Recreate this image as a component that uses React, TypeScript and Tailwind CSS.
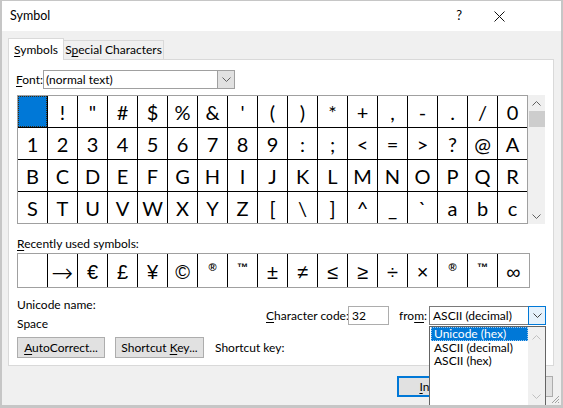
import React from "react";

const rows: string[][] = [
  [" ", "!", '"', "#", "$", "%", "&", "'", "(", ")", "*", "+", ",", "-", ".", "/", "0"],
  ["1", "2", "3", "4", "5", "6", "7", "8", "9", ":", ";", "<", "=", ">", "?", "@", "A"],
  ["B", "C", "D", "E", "F", "G", "H", "I", "J", "K", "L", "M", "N", "O", "P", "Q", "R"],
  ["S", "T", "U", "V", "W", "X", "Y", "Z", "[", "\\", "]", "^", "_", "`", "a", "b", "c"],
];

const recent: string[] = ["", "→", "€", "£", "¥", "©", "®", "™", "±", "≠", "≤", "≥", "÷", "×", "®", "™", "∞"];

function ChevDown({ color = "#606060" }: { color?: string }) {
  return (
    <svg width="9" height="5" viewBox="0 0 9 5">
      <path d="M0.5 0.5 L4.5 4.5 L8.5 0.5" fill="none" stroke={color} strokeWidth="1" />
    </svg>
  );
}
function ChevUp({ color = "#606060" }: { color?: string }) {
  return (
    <svg width="9" height="5" viewBox="0 0 9 5">
      <path d="M0.5 4.5 L4.5 0.5 L8.5 4.5" fill="none" stroke={color} strokeWidth="1" />
    </svg>
  );
}

export default function App() {
  return (
    <div className="relative w-[563px] h-[408px] overflow-hidden bg-[#f0f0f0] border-t border-x-2 border-b-[3px] border-[#c6c6c6] text-[12px] text-black font-[family-name:Lato,sans-serif]">
      {/* Title bar */}
      <div className="h-[30px] bg-white flex items-center pl-[8px]">
        <span className="text-[12.5px]">Symbol</span>
        <div className="ml-auto flex items-center mr-[56px]">
          <span className="text-[13px] mr-[32px]">?</span>
          <svg width="11" height="11" viewBox="0 0 11 11">
            <path d="M0.5 0.5 L10.5 10.5 M10.5 0.5 L0.5 10.5" stroke="#111" strokeWidth="1" />
          </svg>
        </div>
      </div>

      {/* Tabs */}
      <div className="flex items-end h-[21px] mt-[7px] ml-[6px] relative z-10">
        <div className="w-[56px] h-[22px] -mb-px bg-white border-x border-t border-[#d9d9d9] flex items-center justify-center">
          <span>
            <span className="underline underline-offset-2">S</span>ymbols
          </span>
        </div>
        <div className="w-[100px] h-[19px] border-r border-t border-[#d9d9d9] flex items-center justify-center">
          <span>
            S<span className="underline underline-offset-2">p</span>ecial Characters
          </span>
        </div>
      </div>

      {/* Panel */}
      <div className="ml-[6px] w-[546px] h-[307px] bg-white border border-[#d9d9d9] pt-[10px] pl-[8px]">
        {/* Font row */}
        <div className="flex items-center h-[19px]">
          <span className="w-[27px] -ml-px">
            <span className="underline underline-offset-2">F</span>ont:
          </span>
          <div className="w-[192px] h-[19px] border border-[#a0a0a0] flex items-center">
            <span className="pl-[2px] flex-1">(normal text)</span>
            <div className="w-[17px] h-[17px] bg-[#e1e1e1] border-l border-[#a0a0a0] flex items-center justify-center">
              <ChevDown />
            </div>
          </div>
        </div>

        {/* Symbol grid */}
        <div className="flex mt-[6px]">
          <div className="border border-[#a0a0a0]">
            <div className="grid grid-cols-[repeat(17,29px)] auto-rows-[31px] gap-px bg-black">
              {rows.flat().map((c, i) => (
                <div
                  key={i}
                  className={
                    i === 0
                      ? "bg-[#0078d7] border border-dotted border-[#3a2a10]"
                      : "bg-white flex items-center justify-center text-[20px] leading-none"
                  }
                >
                  {i === 0 ? null : c}
                </div>
              ))}
            </div>
          </div>
          <div className="w-[17px] h-[129px] bg-[#f0f0f0] flex flex-col items-center">
            <div className="h-[16px] flex items-center justify-center">
              <ChevUp />
            </div>
            <div className="w-[16px] h-[16px] bg-[#cdcdcd]" />
            <div className="flex-1" />
            <div className="h-[16px] flex items-center justify-center">
              <ChevDown />
            </div>
          </div>
        </div>

        {/* Recently used */}
        <div className="h-[16px] mt-[12px] leading-[16px]">
          <span className="underline underline-offset-2">R</span>ecently used symbols:
        </div>
        <div className="mt-px w-[513px] border border-[#a0a0a0]">
          <div className="grid grid-cols-[repeat(16,29px)_31px] h-[33px] gap-px bg-black">
            {recent.map((c, i) => {
              const small = c === "®" || c === "™";
              const arrow = c === "→";
              return (
                <div
                  key={i}
                  className={
                    small
                      ? "bg-white flex justify-center pt-[8px] text-[11px] leading-none font-[family-name:'Liberation_Sans',sans-serif] font-bold"
                      : arrow
                      ? "bg-white flex items-center justify-center text-[26px] leading-none pt-[4px] font-[family-name:'DejaVu_Sans',sans-serif] font-light"
                      : "bg-white flex items-center justify-center text-[20px] leading-none pt-[2px] font-[family-name:'Liberation_Sans',sans-serif]"
                  }
                >
                  {c}
                </div>
              );
            })}
          </div>
        </div>

        {/* Unicode name / character code */}
        <div className="flex">
          <div className="w-[249px]">
            <div className="h-[16px] mt-[9px] leading-[16px]">Unicode name:</div>
            <div className="h-[16px] mt-[3px] leading-[16px]">Space</div>
          </div>
          <div className="mt-[18px] flex items-center h-[19px]">
            <span className="w-[82px] whitespace-nowrap">
              <span className="underline underline-offset-2">C</span>haracter code:
            </span>
            <div className="w-[41px] h-[19px] border border-[#adadad] flex items-center pl-[3px]">32</div>
            <span className="ml-[10px] w-[30px] whitespace-nowrap">
              fro<span className="underline underline-offset-2">m</span>:
            </span>
            <div className="w-[117px] h-[19px] border border-[#7a7a7a] flex items-center">
              <span className="flex-1 pl-[3px] whitespace-nowrap">ASCII (decimal)</span>
              <div className="w-[18px] h-[19px] -mr-px bg-[#e5f1fb] border border-[#0078d7] flex items-center justify-center">
                <ChevDown color="#404040" />
              </div>
            </div>
          </div>
        </div>

        {/* Buttons row */}
        <div className="flex items-center mt-[5px] h-[21px]">
          <div className="w-[88px] h-[21px] bg-[#e1e1e1] border border-[#adadad] flex items-center justify-center">
            <span>
              <span className="underline underline-offset-2">A</span>utoCorrect...
            </span>
          </div>
          <div className="ml-[10px] w-[89px] h-[21px] bg-[#e1e1e1] border border-[#adadad] flex items-center justify-center">
            <span>
              Shortcut <span className="underline underline-offset-2">K</span>ey...
            </span>
          </div>
          <span className="ml-[11px]">Shortcut key:</span>
        </div>
      </div>

      {/* Dialog buttons */}
      <div className="flex justify-end gap-[6px] pr-[8px] mt-[10px]">
        <div className="w-[75px] h-[21px] bg-[#e1e1e1] border-2 border-[#0078d7] flex items-center justify-center">
          <span>
            <span className="underline underline-offset-2">I</span>nsert
          </span>
        </div>
        <div className="w-[75px] h-[21px] bg-[#e1e1e1] border border-[#adadad] flex items-center justify-center">
          Cancel
        </div>
      </div>

      {/* Resize grip */}
      <svg className="absolute right-[1px] bottom-[1px]" width="9" height="9" viewBox="0 0 9 9">
        <path d="M8 1 L1 8 M8 4 L4 8 M8 7 L7 8" stroke="#a0a0a0" strokeWidth="1" />
      </svg>

      {/* Open dropdown list */}
      <div className="absolute left-[427px] top-[325px] w-[117px] h-[84px] bg-white border border-[#646464] flex">
        <div className="flex-1 pl-px">
          <div className="h-[14px] bg-[#0078d7] text-white border border-dotted border-[#9cc8f0] flex items-center pl-[2px] leading-[12px] whitespace-nowrap">
            Unicode (hex)
          </div>
          <div className="h-[13px] flex items-center pl-[3px] leading-[13px] whitespace-nowrap">ASCII (decimal)</div>
          <div className="h-[13px] flex items-center pl-[3px] leading-[13px] whitespace-nowrap">ASCII (hex)</div>
        </div>
        <div className="w-[17px] bg-[#f0f0f0] flex flex-col items-center">
          <div className="h-[16px] flex items-center justify-center mt-[2px]">
            <ChevUp color="#c0c0c0" />
          </div>
          <div className="flex-1" />
          <div className="h-[16px] flex items-center justify-center mb-[5px]">
            <ChevDown color="#c0c0c0" />
          </div>
        </div>
      </div>
    </div>
  );
}
